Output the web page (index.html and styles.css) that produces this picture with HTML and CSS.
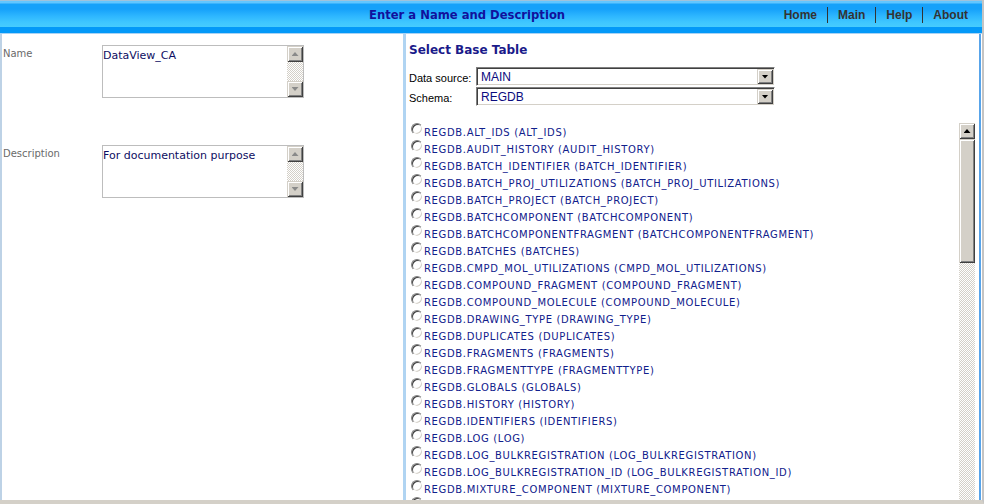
FILE: index.html
```html
<!DOCTYPE html>
<html lang="en">
<head>
<meta charset="utf-8">
<title>Enter a Name and Description</title>
<link rel="stylesheet" href="styles.css">
</head>
<body>
<div class="page">
  <header class="topbar">
    <h1 class="topbar-title">Enter a Name and Description</h1>
    <nav class="topnav">
      <a href="#">Home</a>
      <a href="#">Main</a>
      <a href="#">Help</a>
      <a href="#">About</a>
    </nav>
  </header>
  <main class="content">
    <section class="left-pane">
      <div class="field-grid">
        <label class="field-label">Name</label>
        <div class="textbox">
          <textarea class="textbox-input">DataView_CA</textarea>
          <div class="vscroll">
            <div class="sb-btn"><span class="arrow arrow-up arrow-disabled"></span></div>
            <div class="sb-track"></div>
            <div class="sb-btn"><span class="arrow arrow-down arrow-disabled"></span></div>
          </div>
        </div>
        <label class="field-label">Description</label>
        <div class="textbox">
          <textarea class="textbox-input">For documentation purpose</textarea>
          <div class="vscroll">
            <div class="sb-btn"><span class="arrow arrow-up arrow-disabled"></span></div>
            <div class="sb-track"></div>
            <div class="sb-btn"><span class="arrow arrow-down arrow-disabled"></span></div>
          </div>
        </div>
      </div>
    </section>
    <section class="right-pane">
      <h2 class="pane-title">Select Base Table</h2>
      <div class="source-grid">
        <label class="source-label">Data source:</label>
        <div class="combo">
          <select class="combo-select"><option>MAIN</option></select>
          <div class="combo-btn"><span class="arrow arrow-down"></span></div>
        </div>
        <label class="source-label">Schema:</label>
        <div class="combo">
          <select class="combo-select"><option>REGDB</option></select>
          <div class="combo-btn"><span class="arrow arrow-down"></span></div>
        </div>
      </div>
      <div class="table-list">
        <div class="table-items">
          <label class="table-item"><input type="radio" name="tbl" class="radio"><span>REGDB.ALT_IDS (ALT_IDS)</span></label>
          <label class="table-item"><input type="radio" name="tbl" class="radio"><span>REGDB.AUDIT_HISTORY (AUDIT_HISTORY)</span></label>
          <label class="table-item"><input type="radio" name="tbl" class="radio"><span>REGDB.BATCH_IDENTIFIER (BATCH_IDENTIFIER)</span></label>
          <label class="table-item"><input type="radio" name="tbl" class="radio"><span>REGDB.BATCH_PROJ_UTILIZATIONS (BATCH_PROJ_UTILIZATIONS)</span></label>
          <label class="table-item"><input type="radio" name="tbl" class="radio"><span>REGDB.BATCH_PROJECT (BATCH_PROJECT)</span></label>
          <label class="table-item"><input type="radio" name="tbl" class="radio"><span>REGDB.BATCHCOMPONENT (BATCHCOMPONENT)</span></label>
          <label class="table-item"><input type="radio" name="tbl" class="radio"><span>REGDB.BATCHCOMPONENTFRAGMENT (BATCHCOMPONENTFRAGMENT)</span></label>
          <label class="table-item"><input type="radio" name="tbl" class="radio"><span>REGDB.BATCHES (BATCHES)</span></label>
          <label class="table-item"><input type="radio" name="tbl" class="radio"><span>REGDB.CMPD_MOL_UTILIZATIONS (CMPD_MOL_UTILIZATIONS)</span></label>
          <label class="table-item"><input type="radio" name="tbl" class="radio"><span>REGDB.COMPOUND_FRAGMENT (COMPOUND_FRAGMENT)</span></label>
          <label class="table-item"><input type="radio" name="tbl" class="radio"><span>REGDB.COMPOUND_MOLECULE (COMPOUND_MOLECULE)</span></label>
          <label class="table-item"><input type="radio" name="tbl" class="radio"><span>REGDB.DRAWING_TYPE (DRAWING_TYPE)</span></label>
          <label class="table-item"><input type="radio" name="tbl" class="radio"><span>REGDB.DUPLICATES (DUPLICATES)</span></label>
          <label class="table-item"><input type="radio" name="tbl" class="radio"><span>REGDB.FRAGMENTS (FRAGMENTS)</span></label>
          <label class="table-item"><input type="radio" name="tbl" class="radio"><span>REGDB.FRAGMENTTYPE (FRAGMENTTYPE)</span></label>
          <label class="table-item"><input type="radio" name="tbl" class="radio"><span>REGDB.GLOBALS (GLOBALS)</span></label>
          <label class="table-item"><input type="radio" name="tbl" class="radio"><span>REGDB.HISTORY (HISTORY)</span></label>
          <label class="table-item"><input type="radio" name="tbl" class="radio"><span>REGDB.IDENTIFIERS (IDENTIFIERS)</span></label>
          <label class="table-item"><input type="radio" name="tbl" class="radio"><span>REGDB.LOG (LOG)</span></label>
          <label class="table-item"><input type="radio" name="tbl" class="radio"><span>REGDB.LOG_BULKREGISTRATION (LOG_BULKREGISTRATION)</span></label>
          <label class="table-item"><input type="radio" name="tbl" class="radio"><span>REGDB.LOG_BULKREGISTRATION_ID (LOG_BULKREGISTRATION_ID)</span></label>
          <label class="table-item"><input type="radio" name="tbl" class="radio"><span>REGDB.MIXTURE_COMPONENT (MIXTURE_COMPONENT)</span></label>
          <label class="table-item table-item-clipped"><input type="radio" name="tbl" class="radio"></label>
        </div>
        <div class="vscroll vscroll-list">
          <div class="sb-btn"><span class="arrow arrow-up"></span></div>
          <div class="sb-thumb"></div>
          <div class="sb-track"></div>
        </div>
      </div>
    </section>
  </main>
</div>
</body>
</html>
```
FILE: styles.css
```css
* {
  box-sizing: border-box;
}

html,
body {
  margin: 0;
  padding: 0;
  background: #fff;
  font-family: "DejaVu Sans", Verdana, sans-serif;
}

.page {
  width: 984px;
  height: 504px;
  display: flex;
  flex-direction: column;
  overflow: hidden;
  background: #fff;
  border-right: 2px solid #c4c4c4;
  border-bottom: 4px solid #d4d0c8;
}

/* ---------- header ---------- */
.topbar {
  flex: none;
  height: 34px;
  display: flex;
  align-items: center;
  padding-top: 1px;
  padding-bottom: 5px;
  border-top: 1px solid #9fc2dc;
  border-bottom: 1px solid #a9d3f4;
  background: linear-gradient(to bottom,
    #62c6ff 0, #62c6ff 2px,
    #16a1fa 3px, #16a1fa 8px,
    #2db6ff 15px, #3ec6ff 21px, #46ccfe 26px,
    #0399f8 26px, #0399f8 100%);
}

.topbar-title {
  margin: 0 0 0 369px;
  font-family: "DejaVu Sans", Verdana, sans-serif;
  font-weight: bold;
  font-size: 11.6px;
  line-height: 14px;
  color: #11119c;
  white-space: nowrap;
}

.topnav {
  margin-left: auto;
  display: flex;
  padding-right: 4px;
}

.topnav a {
  font-family: "Liberation Sans", Arial, sans-serif;
  font-weight: bold;
  font-size: 12px;
  line-height: 16px;
  height: 16px;
  padding: 0 10px;
  color: #333;
  text-decoration: none;
}

.topnav a + a {
  border-left: 1px solid #333;
}

/* ---------- body ---------- */
.content {
  flex: 1;
  min-height: 0;
  display: flex;
}

.left-pane {
  flex: none;
  width: 406px;
  border-left: 2px solid #bdd2e6;
  border-right: 3px solid #b0d4f2;
  padding: 11px 0 0 1px;
}

.field-grid {
  display: grid;
  grid-template-columns: 99px 202px;
  row-gap: 47px;
  align-items: start;
}

.field-label {
  font-size: 10px;
  line-height: 12px;
  padding-top: 3px;
  color: #6a6a6a;
}

.textbox {
  height: 53px;
  display: flex;
  border: 1px solid #bdbdbd;
  background: #fff;
}

.textbox-input {
  flex: 1;
  min-width: 0;
  margin: 0;
  border: 0;
  padding: 3px 0 0 0;
  font-family: "DejaVu Sans", Verdana, sans-serif;
  font-size: 11px;
  line-height: 13px;
  color: #0d0d62;
  background: transparent;
  resize: none;
  overflow: hidden;
  outline: none;
}

/* ---------- classic scrollbars ---------- */
.vscroll {
  flex: none;
  width: 16px;
  display: flex;
  flex-direction: column;
}

.sb-btn,
.sb-thumb,
.combo-btn {
  background: #d4d0c8;
  box-shadow:
    inset 1px 1px #d4d0c8,
    inset -1px -1px #404040,
    inset 2px 2px #fff,
    inset -2px -2px #808080;
}

.sb-btn {
  flex: none;
  width: 16px;
  height: 16px;
  display: flex;
  align-items: center;
  justify-content: center;
}

.sb-thumb {
  flex: none;
  width: 16px;
  height: 124px;
}

.sb-track {
  flex: 1;
  background-color: #fff;
  background-image: conic-gradient(#d4d0c8 0 25%, #fff 0 50%, #d4d0c8 0 75%, #fff 0);
  background-size: 2px 2px;
}

.arrow {
  display: block;
  width: 7px;
  height: 4px;
  background: #000;
}

.arrow-up {
  clip-path: polygon(50% 0, 100% 100%, 0 100%);
}

.arrow-down {
  clip-path: polygon(0 0, 100% 0, 50% 100%);
}

.arrow-disabled {
  background: #8a8a8a;
}

/* ---------- right pane ---------- */
.right-pane {
  flex: 1;
  min-width: 0;
  display: flex;
  flex-direction: column;
  margin-right: 1px;
  padding: 8px 4px 0 3px;
  border-right: 2px solid #58a4ea;
}

.pane-title {
  margin: 0;
  font-family: "DejaVu Sans", Verdana, sans-serif;
  font-weight: bold;
  font-size: 12px;
  line-height: 16px;
  color: #1a1a8a;
}

.source-grid {
  margin-top: 9px;
  display: grid;
  grid-template-columns: 67px 299px;
  row-gap: 1px;
  align-items: center;
}

.source-label {
  font-family: "Liberation Sans", Arial, sans-serif;
  font-size: 11px;
  line-height: 14px;
  padding-top: 3px;
  color: #000;
}

.combo {
  height: 19px;
  display: flex;
  padding: 1px;
  border: 1px solid;
  border-color: #808080 #fff #fff #808080;
  box-shadow: inset 1px 1px #404040, inset -1px -1px #d4d0c8;
  background: #fff;
}

.combo-select {
  flex: 1;
  min-width: 0;
  height: 15px;
  margin: 0;
  padding: 2px 0 0 3px;
  border: 0;
  appearance: none;
  -webkit-appearance: none;
  background: transparent;
  font-family: "Liberation Sans", Arial, sans-serif;
  font-size: 12px;
  line-height: 13px;
  color: #0b0b7e;
  outline: none;
}

.combo-btn {
  flex: none;
  width: 16px;
  height: 15px;
  display: flex;
  align-items: center;
  justify-content: center;
}

.table-list {
  flex: 1;
  min-height: 0;
  margin-top: 17px;
  display: flex;
  overflow: hidden;
}

.table-items {
  flex: 1;
  min-width: 0;
  padding-left: 2px;
  overflow: hidden;
}

.table-item {
  display: flex;
  align-items: flex-start;
  height: 17px;
  white-space: nowrap;
  font-family: "DejaVu Sans", Verdana, sans-serif;
  font-size: 10px;
  line-height: 12px;
  letter-spacing: 0.65px;
  color: #10208c;
}

.table-item span {
  padding-top: 4px;
}

.radio {
  appearance: none;
  -webkit-appearance: none;
  flex: none;
  width: 12px;
  height: 12px;
  margin: 0 1px 0 0;
  border-radius: 50%;
  border: 1px solid;
  border-color: #808080 #fff #fff #808080;
  box-shadow: inset 1px 1px #404040, inset -1px -1px #d4d0c8;
  background: #fff;
}
```
